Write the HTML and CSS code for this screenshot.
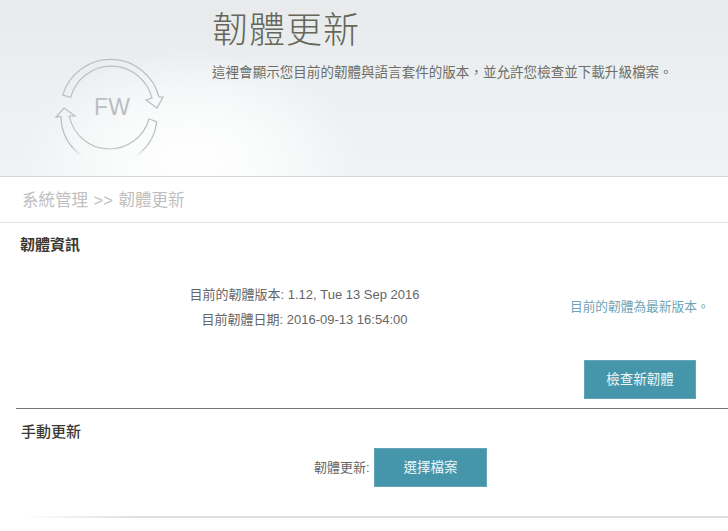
FILE: index.html
```html
<!DOCTYPE html>
<html lang="zh-Hant">
<head>
<meta charset="utf-8">
<title>韌體更新</title>
<link rel="stylesheet" href="styles.css">
</head>
<body>
<header class="hero">
  <div class="hero-icon">
    <svg class="fw-icon" width="110" height="104" viewBox="55 54 110 104" aria-hidden="true">
      <defs>
        <linearGradient id="fade" gradientUnits="userSpaceOnUse" x1="0" y1="124" x2="0" y2="157">
          <stop offset="0" stop-color="#bcbebf"/>
          <stop offset="0.72" stop-color="#c0c2c3"/>
          <stop offset="1" stop-color="#fafbfb"/>
        </linearGradient>
      </defs>
      <path class="ring" d="M62.7 95 A50 50 0 0 1 159 97 L163 97 L157 108 L146 100 L152 98 A42 42 0 0 0 70.7 97.3 Z"/>
      <path class="ring ring-low" d="M156.7 121.7 A48 48 0 0 1 61 116.7 L56 117 L64 108 L75 116 L69.3 116 A41 41 0 0 0 149 119 Z"/>
      <text class="fw-text" x="112" y="115" text-anchor="middle">FW</text>
    </svg>
  </div>
  <div class="hero-text">
    <h1 class="hero-title">韌體更新</h1>
    <p class="hero-desc">這裡會顯示您目前的韌體與語言套件的版本&#65292;並允許您檢查並下載升級檔案。</p>
  </div>
</header>
<nav class="crumb">系統管理 &gt;&gt; 韌體更新</nav>
<section class="fw-info">
  <h2 class="sec-title">韌體資訊</h2>
  <div class="info-row">
    <div class="versions">
      <p>目前的韌體版本: 1.12, Tue 13 Sep 2016</p>
      <p>目前韌體日期: 2016-09-13 16:54:00</p>
    </div>
    <p class="status">目前的韌體為最新版本。</p>
  </div>
  <div class="check-row"><button class="btn btn-check">檢查新韌體</button></div>
</section>
<section class="manual">
  <h2 class="sec-title">手動更新</h2>
  <div class="upload-row">
    <span class="upload-label">韌體更新:</span>
    <button class="btn btn-file">選擇檔案</button>
  </div>
</section>
<div class="foot-line"></div>
</body>
</html>
```

FILE: styles.css
```css
* { box-sizing: border-box; }
html, body { margin: 0; padding: 0; background: #fff; }
body {
  width: 728px;
  height: 531px;
  overflow: hidden;
  font-family: "Liberation Sans", "Noto Sans CJK TC", sans-serif;
  color: #666;
}
p, h1, h2 { margin: 0; font-weight: normal; }

.hero {
  height: 177px;
  display: flex;
  border-bottom: 1px solid #d6d9da;
  background:
    radial-gradient(ellipse 170px 110px at 190px 160px, #ffffff 0%, rgba(255,255,255,0.7) 45%, rgba(255,255,255,0) 100%),
    linear-gradient(180deg, #e8eaeb 0%, #ecf0f2 50%, #eff3f4 100%);
}
.hero-icon { width: 212px; padding: 54px 0 0 55px; flex: none; }
.fw-icon { display: block; }
.ring { fill: none; stroke: #bcbebf; stroke-width: 1.2; }
.ring-low { stroke: url(#fade); }
.fw-text { font-family: "Liberation Sans", sans-serif; font-size: 23px; fill: #bbbdbe; }
.hero-text { flex: 1; padding-top: 5px; }
.hero-title {
  font-family: "Noto Sans CJK TC", sans-serif;
  font-size: 36px;
  font-weight: 300;
  line-height: 44px;
  letter-spacing: 1px;
  color: #66665a;
}
.hero-desc {
  margin-top: 14px;
  font-size: 13.55px;
  line-height: 20px;
  color: #6e6e66;
  white-space: nowrap;
}

.crumb {
  height: 46px;
  padding-left: 22px;
  line-height: 46px;
  font-size: 16.5px;
  word-spacing: 1px;
  color: #c0c0c0;
  border-bottom: 1px solid #e4e4e4;
}

.fw-info { height: 185px; display: flex; flex-direction: column; }
.sec-title {
  padding: 12px 0 0 20px;
  font-size: 15px;
  line-height: 20px;
  font-weight: 700;
  color: #3a3a32;
}
.info-row { display: flex; margin-top: 27px; }
.versions { width: 570px; padding-left: 39px; text-align: center; font-size: 13px; flex: none; }
.versions p { line-height: 25px; }
.status { margin-top: 13px; line-height: 25px; font-size: 12.7px; color: #6fa3b5; white-space: nowrap; }

.check-row { display: flex; justify-content: flex-end; padding-right: 32px; margin-top: 28px; }
.btn {
  border: 1px solid #62a5b6;
  padding: 0 0 4px;
  background: #4596aa;
  color: #eef6f8;
  font-family: inherit;
  font-size: 13.5px;
  height: 39px;
}
.btn-check { width: 112px; }

.manual { height: 108px; }
.manual .sec-title {
  margin-left: 16px;
  padding: 13px 0 0 5px;
  border-top: 1px solid #777;
  font-weight: 500;
}
.upload-row { display: flex; align-items: center; padding-left: 314px; margin-top: 6px; }
.upload-label { font-size: 13px; width: 60px; white-space: nowrap; color: #666; padding-bottom: 3px; }
.btn-file { width: 113px; }

.foot-line { height: 2px; background: linear-gradient(90deg, #ffffff 3%, #e0e0e0 18%, #e0e0e0 100%); }
```
